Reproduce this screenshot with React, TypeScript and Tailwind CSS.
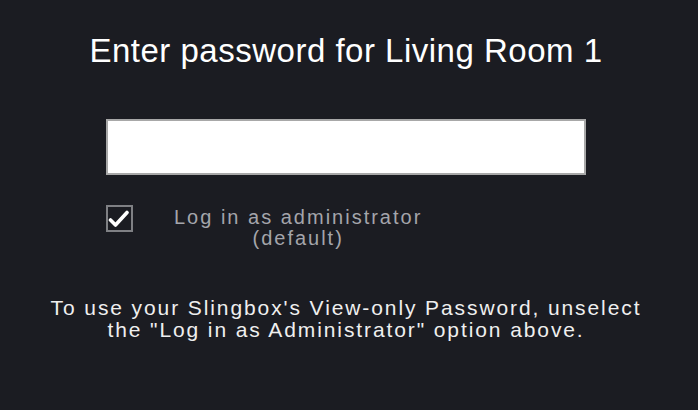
import React from 'react';

export default function App() {
    return (
        <div
            className="w-[698px] h-[410px] bg-[#1b1c22] flex flex-col items-center pr-[6px] text-white"
            style={{ fontFamily: '"Liberation Sans", Arial, sans-serif' }}
        >
            {/* Title */}
            <h1 className="mt-[32px] text-[33px] leading-[38px] tracking-[0.5px] text-white">
                Enter password for Living Room 1
            </h1>

            {/* Password field */}
            <input
                type="password"
                className="mt-[49px] w-[480px] h-[56px] bg-white border-2 border-[#a8a8a8] outline-none"
            />

            {/* Admin checkbox */}
            <div className="mt-[30px] w-[480px] flex items-start">
                <div className="w-[27px] h-[27px] shrink-0 border-2 border-[#7f8084] flex items-center justify-center">
                    <svg width="23" height="23" viewBox="0 0 23 23">
                        <path
                            d="M2.5 13 L7.5 18 L19 5.5"
                            fill="none"
                            stroke="white"
                            strokeWidth="3.6"
                            strokeLinecap="round"
                            strokeLinejoin="round"
                        />
                    </svg>
                </div>
                <div className="ml-[41px] mt-[2px] text-[20px] leading-[21px] tracking-[2px] text-[#a4a5ab] text-center">
                    Log in as administrator
                    <br />
                    (default)
                </div>
            </div>

            {/* Hint */}
            <p className="mt-[48px] text-[21px] leading-[22px] tracking-[1.9px] text-[#efefef] text-center">
                To use your Slingbox's View-only Password, unselect
                <br />
                the "Log in as Administrator" option above.
            </p>
        </div>
    );
}
